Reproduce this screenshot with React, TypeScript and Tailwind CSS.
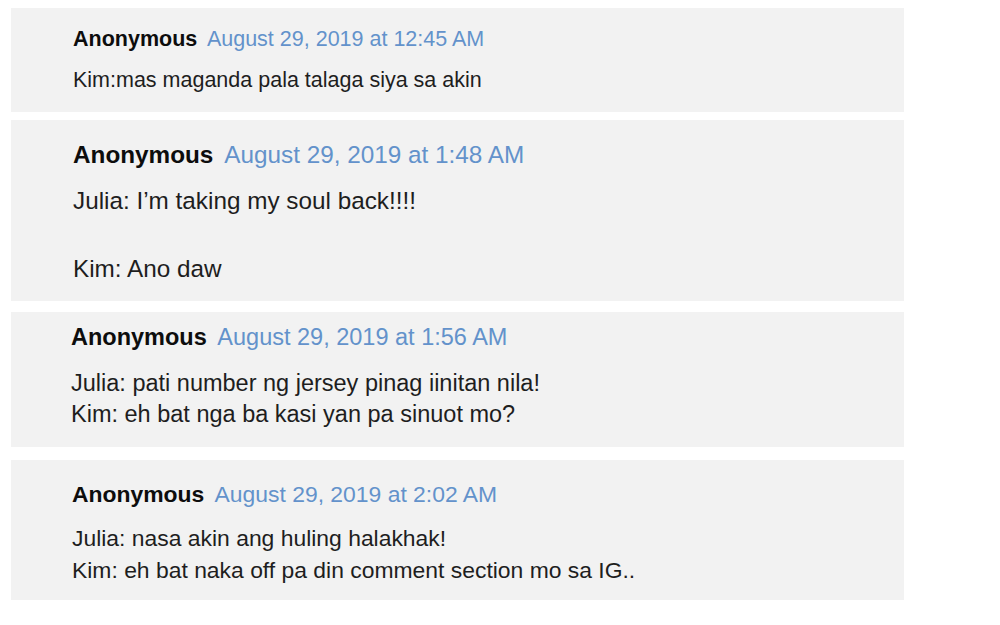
import React from "react";

type Comment = {
	date: string;
	lines: string[];
};

const comments: Comment[] = [
	{ date: "August 29, 2019 at 12:45 AM", lines: ["Kim:mas maganda pala talaga siya sa akin"] },
	{ date: "August 29, 2019 at 1:48 AM", lines: ["Julia: I\u2019m taking my soul back!!!!", "", "Kim: Ano daw"] },
	{
		date: "August 29, 2019 at 1:56 AM",
		lines: ["Julia: pati number ng jersey pinag iinitan nila!", "Kim: eh bat nga ba kasi yan pa sinuot mo?"],
	},
	{
		date: "August 29, 2019 at 2:02 AM",
		lines: ["Julia: nasa akin ang huling halakhak!", "Kim: eh bat naka off pa din comment section mo sa IG.."],
	},
];

// each screenshot was pasted in at a slightly different scale
const panelStyles = [
	{ box: "mt-[8px] h-[104px] pl-[62px] pt-[16px] text-[21.5px] leading-[30px]", gap: "mt-[11px]" },
	{ box: "mt-[8px] h-[181px] pl-[62px] pt-[18px] text-[24.3px] leading-[34px]", gap: "mt-[12px]" },
	{ box: "mt-[11px] h-[135px] pl-[60px] pt-[10px] text-[23.5px] leading-[31px]", gap: "mt-[15px]" },
	{ box: "mt-[13px] h-[140px] pl-[61px] pt-[18px] text-[22.9px] leading-[32px]", gap: "mt-[12px]" },
];

const CommentCard = ({ comment, index }: { comment: Comment; index: number }) => {
	const s = panelStyles[index];
	return (
		<div className={`ml-[11px] w-[893px] bg-[#f2f2f2] ${s.box}`}>
			<div className="flex items-baseline">
				<span className="font-bold text-[#0d0d0d]">Anonymous</span>
				<span className="ml-[0.45em] text-[#6392cb]">{comment.date}</span>
			</div>
			<div className={`text-[#1e1e1e] ${s.gap}`}>
				{comment.lines.map((line, i) => (
					<div key={i} className="whitespace-pre">
						{line === "" ? "\u00a0" : line}
					</div>
				))}
			</div>
		</div>
	);
};

export default function App() {
	return (
		<div className="w-[1000px] h-[625px] overflow-hidden bg-white font-['Liberation_Sans',Arial,sans-serif]">
			{comments.map((c, i) => (
				<CommentCard key={i} comment={c} index={i} />
			))}
		</div>
	);
}
